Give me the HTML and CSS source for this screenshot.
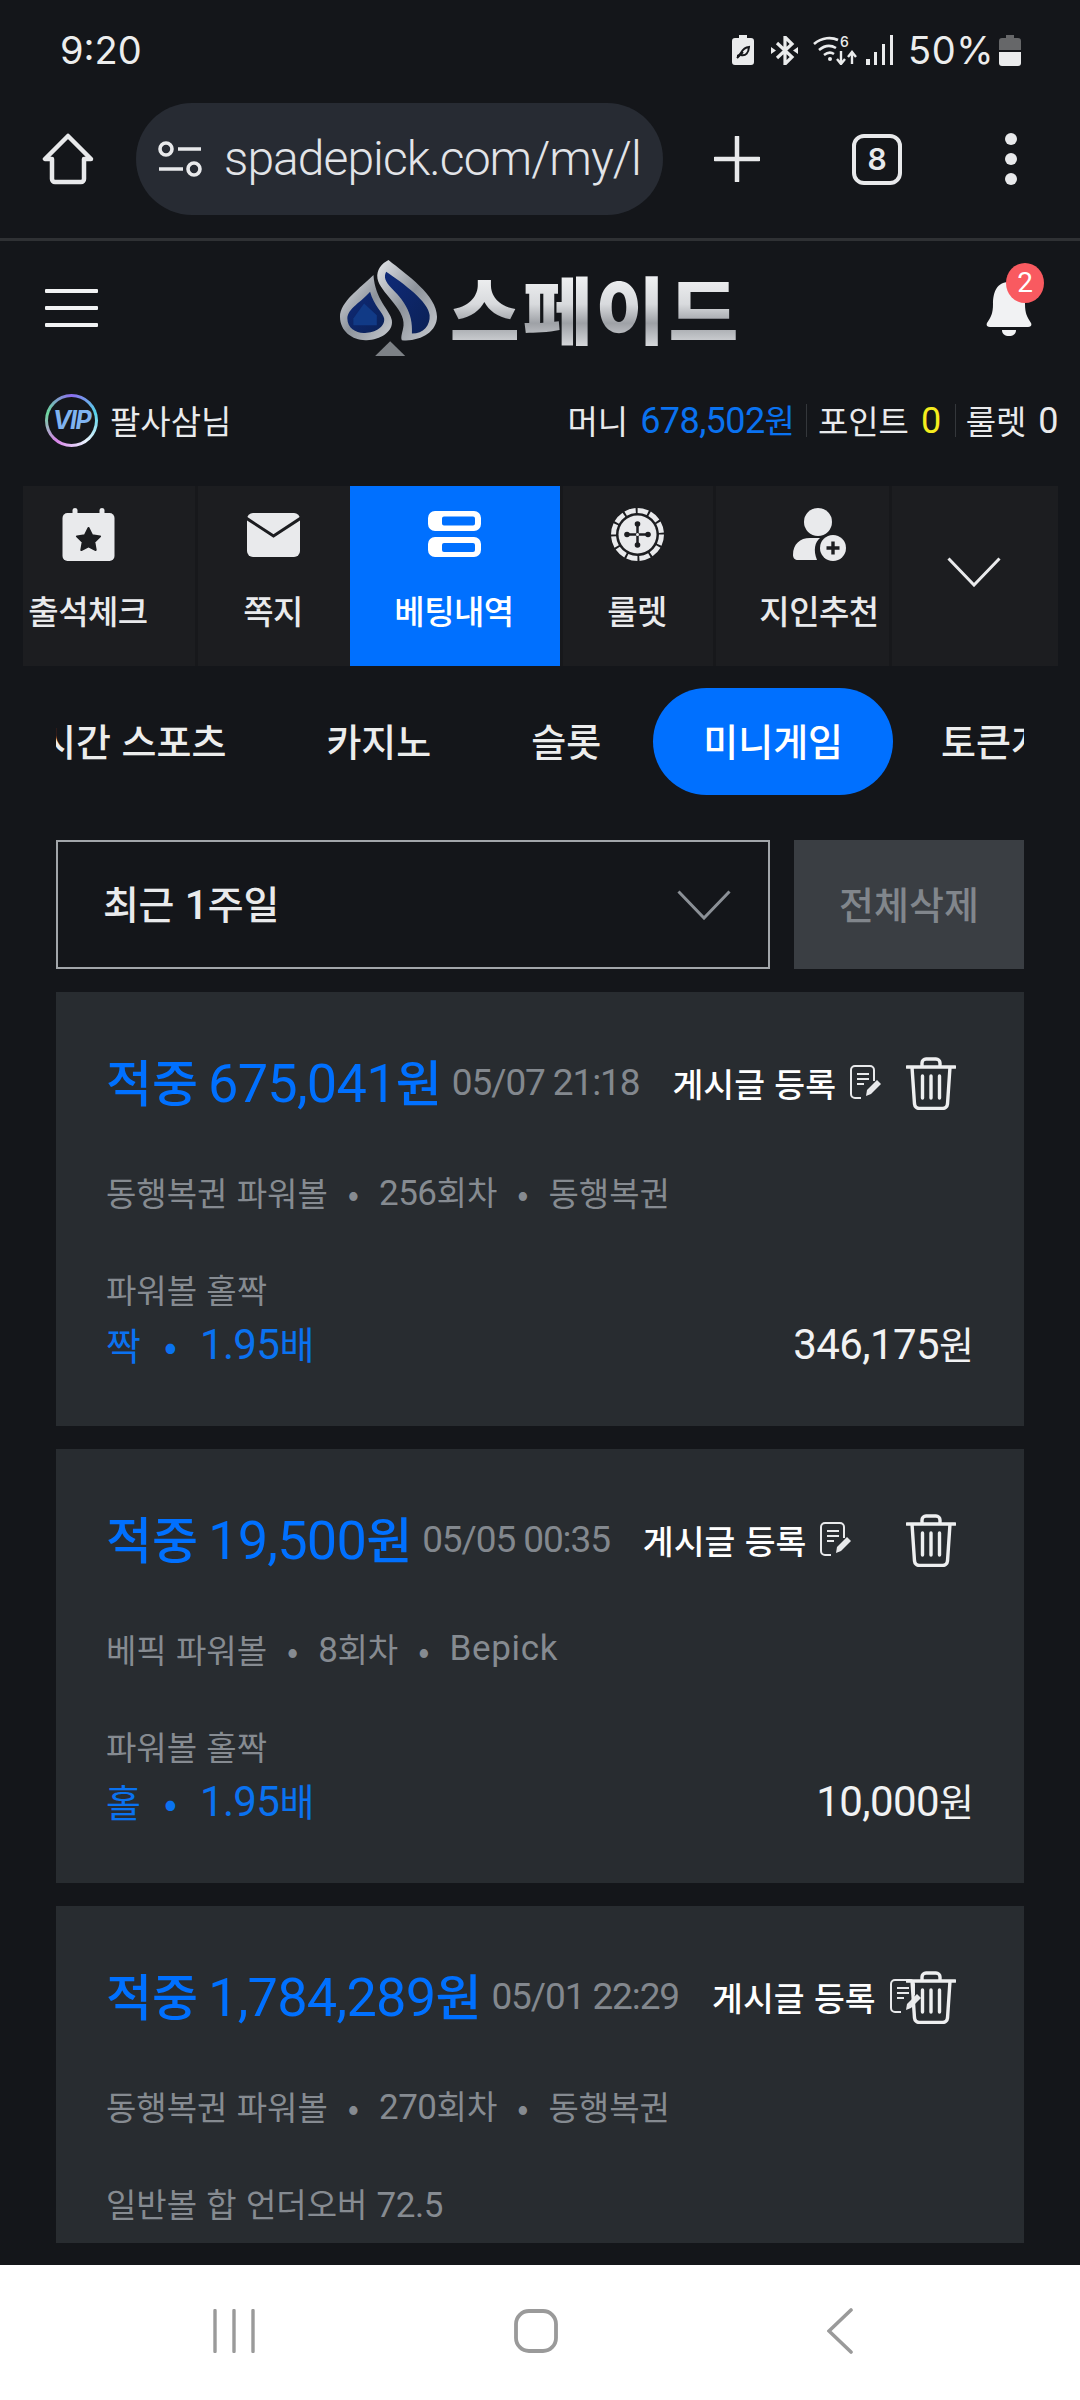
FILE: index.html
```html
<!DOCTYPE html>
<html lang="ko">
<head>
<meta charset="utf-8">
<title>스페이드</title>
<link rel="stylesheet" href="styles.css">
</head>
<body>
<div class="screen">
  <div class="status">
    <span class="time">9:20</span>
    <div class="status-right">
      <svg class="st-saver" viewBox="0 0 22 30"><path d="M7 0h8v3h4a3 3 0 0 1 3 3v21a3 3 0 0 1-3 3H3a3 3 0 0 1-3-3V6a3 3 0 0 1 3-3h4z" fill="#eaebec"/><path d="M5 21c5 0 3-8 12-9-.5 6-3 9-8 8M5 23l6-6" fill="none" stroke="#14161a" stroke-width="2"/></svg>
      <svg class="st-bt" viewBox="0 0 27 29"><path d="M6 7l15 14-7 7V1l7 7L6 22" fill="none" stroke="#eaebec" stroke-width="3.2"/><path d="M0 11l5 3.5L0 18zM27 11l-5 3.5 5 3.5z" fill="#eaebec"/></svg>
      <svg class="st-wifi" viewBox="0 0 44 30"><path d="M1 9c8-7 18-7 24-4M6 15c6-5 12-5 17-2M11 20c4-3 7-3 10-1" fill="none" stroke="#eaebec" stroke-width="2.6"/><circle cx="17" cy="24" r="2" fill="#eaebec"/><path d="M28 16v12m-4-4l4 5 4-5M39 29V18m-4 4l4-5 4 5" fill="none" stroke="#eaebec" stroke-width="2.4"/><text x="27" y="12" class="st-six">6</text></svg>
      <svg class="st-sig" viewBox="0 0 28 30"><rect x="0" y="24" width="4" height="6" fill="#eaebec"/><rect x="8" y="17" width="3" height="13" fill="#eaebec"/><rect x="16" y="9" width="3" height="21" fill="#eaebec"/><rect x="24" y="0" width="3" height="30" fill="#eaebec"/></svg>
      <span class="pct">50%</span>
      <svg class="st-bat" viewBox="0 0 22 31"><path d="M7 0h8v3h4a3 3 0 0 1 3 3v9H0V6a3 3 0 0 1 3-3h4z" fill="#666769"/><path d="M0 17h22v11a3 3 0 0 1-3 3H3a3 3 0 0 1-3-3z" fill="#eaebec"/></svg>
    </div>
  </div>

  <div class="toolbar">
    <svg class="tb-home" viewBox="0 0 52 52"><path d="M26 3L3 26h7v20a3 3 0 0 0 3 3h26a3 3 0 0 0 3-3V26h7z" fill="none" stroke="#e8e9eb" stroke-width="4.5" stroke-linejoin="round"/></svg>
    <div class="urlbar">
      <svg class="tb-tune" viewBox="0 0 44 36"><circle cx="8" cy="8" r="6" fill="none" stroke="#e8e9eb" stroke-width="3.6"/><path d="M20 8h23M1 28h24" stroke="#e8e9eb" stroke-width="3.6"/><circle cx="36" cy="28" r="6" fill="none" stroke="#e8e9eb" stroke-width="3.6"/></svg>
      <span class="url">spadepick.com/my/l</span>
    </div>
    <svg class="tb-plus" viewBox="0 0 46 46"><path d="M23 1v44M1 23h44" stroke="#e8e9eb" stroke-width="4.5" stroke-linecap="round"/></svg>
    <div class="tb-tabs">8</div>
    <div class="tb-dots"><i></i><i></i><i></i></div>
  </div>

  <header class="header">
    <div class="burger"><i></i><i></i><i></i></div>
    <div class="logo">
      <svg class="spade" viewBox="60 65 290 290">
        <defs>
          <linearGradient id="sil" x1="0" y1="0" x2="1" y2="1"><stop offset="0" stop-color="#e4e6ea"/><stop offset=".5" stop-color="#8d939b"/><stop offset="1" stop-color="#c9ccd1"/></linearGradient>
          <linearGradient id="blu" x1="0" y1="0" x2="1" y2="1"><stop offset="0" stop-color="#0f2a78"/><stop offset="1" stop-color="#0b2156"/></linearGradient>
        </defs>
        <path d="M160 110C120 150 60 190 60 235c0 45 40 72 80 70 40-2 80-25 75-60-5-30-50-60-55-135z" fill="url(#sil)"/>
        <path d="M150 160c-25 30-68 50-68 80 0 30 28 45 53 43 30 0 60-18 57-43-2-15-32-40-42-80z" fill="url(#blu)"/>
        <path d="M132 195l-32 45 0 20 70 0 0-30z" fill="#113a86"/>
        <path d="M205 65c-20 10-37 30-33 55 6 40 83 90 78 140-2 20-10 35-5 45 55 5 105-25 105-70 0-65-90-125-145-170z" fill="url(#sil)"/>
        <path d="M198 100c-8 15-3 30 17 50 30 30 65 70 60 135 35 0 55-25 53-55-3-40-78-95-130-130z" fill="url(#blu)"/>
        <path d="M165 352l45-44 45 44z" fill="#7d8186"/>
      </svg>
      <span class="logo-text">스페이드</span>
    </div>
    <div class="bell">
      <svg viewBox="0 0 48 56"><path d="M24 2C12 2 8 12 8 24c0 9-2 13-6 19-1 2 0 4 3 4h38c3 0 4-2 3-4-4-6-6-10-6-19C40 12 36 2 24 2z" fill="#f1f2f3"/><path d="M17 50h14c0 4-3 6-7 6s-7-2-7-6z" fill="#f1f2f3"/></svg>
      <span class="badge">2</span>
    </div>
  </header>

  <div class="userbar">
    <div class="user">
      <div class="vip"><span>VIP</span></div>
      <span class="name">팔사삼님</span>
    </div>
    <div class="wallet">
      <span class="w-label">머니</span><span class="w-val w-blue"><span class="num">678,502</span>원</span>
      <i class="w-sep"></i>
      <span class="w-label">포인트</span><span class="w-val w-yellow"><span class="num">0</span></span>
      <i class="w-sep"></i>
      <span class="w-label">룰렛</span><span class="w-val"><span class="num">0</span></span>
    </div>
  </div>

  <nav class="nav">
    <div class="nav-strip">
      <a class="cell cell-a">
        <svg class="ic ic-cal" viewBox="0 0 52 53"><rect x="0" y="5" width="52" height="48" rx="5" fill="#e9eaec"/><rect x="10" y="0" width="5" height="10" rx="2.5" fill="#e9eaec"/><rect x="37" y="0" width="5" height="10" rx="2.5" fill="#e9eaec"/><path d="M26 20l3.6 7.3 8 1.1-5.8 5.6 1.4 8L26 38.3 18.8 42l1.4-8-5.8-5.6 8-1.1z" fill="#1c1d20" stroke="#1c1d20" stroke-width="2" stroke-linejoin="round"/></svg>
        <span class="cell-t">출석체크</span>
      </a>
      <a class="cell cell-b">
        <svg class="ic ic-mail" viewBox="0 0 53 53"><rect x="0" y="5" width="53" height="44" rx="6" fill="#e9eaec"/><path d="M-1 10l27.5 18L54 10" fill="none" stroke="#1c1d20" stroke-width="3"/></svg>
        <span class="cell-t">쪽지</span>
      </a>
      <a class="cell cell-c active">
        <svg class="ic" viewBox="0 0 53 53"><path fill-rule="evenodd" d="M7 3h39a7 7 0 0 1 7 7v6a7 7 0 0 1-7 7H7a7 7 0 0 1-7-7v-6a7 7 0 0 1 7-7zm9 5.500a2 2 0 0 0-2 2v5a2 2 0 0 0 2 2h29a2 2 0 0 0 2-2v-5a2 2 0 0 0-2-2zM7 29h39a7 7 0 0 1 7 7v6a7 7 0 0 1-7 7H7a7 7 0 0 1-7-7v-6a7 7 0 0 1 7-7zm9 6a2 2 0 0 0-2 2v5a2 2 0 0 0 2 2h29a2 2 0 0 0 2-2v-5a2 2 0 0 0-2-2z" fill="#fff"/></svg>
        <span class="cell-t">베팅내역</span>
      </a>
      <a class="cell cell-d">
        <svg class="ic" viewBox="0 0 53 53"><circle cx="26.500" cy="26.500" r="24" fill="none" stroke="#e9eaec" stroke-width="5" stroke-dasharray="10.500 2"/><circle cx="26.500" cy="26.500" r="19" fill="#e9eaec"/><path d="M26.500 16v21M16 26.500h21" stroke="#1c1d20" stroke-width="2.500"/><circle cx="26.500" cy="16" r="2.800" fill="#1c1d20"/><circle cx="26.500" cy="37" r="2.800" fill="#1c1d20"/><circle cx="16" cy="26.500" r="2.800" fill="#1c1d20"/><circle cx="37" cy="26.500" r="2.800" fill="#1c1d20"/><circle cx="26.500" cy="26.500" r="1.500" fill="#e9eaec"/></svg>
        <span class="cell-t">룰렛</span>
      </a>
      <a class="cell cell-e">
        <svg class="ic" viewBox="0 0 53 53"><circle cx="25" cy="14" r="14" fill="#e9eaec"/><path d="M0 47c0-11 7-17 17-17h10c-5 4-7 12-3 22H5c-3 0-5-2-5-5z" fill="#e9eaec"/><circle cx="40" cy="40" r="13" fill="#e9eaec"/><path d="M40 33.500v13M33.500 40h13" stroke="#1c1d20" stroke-width="3.400"/></svg>
        <span class="cell-t">지인추천</span>
      </a>
    </div>
    <button class="more" type="button"><svg viewBox="0 0 54 30"><path d="M1.500 1.500L27 28 52.500 1.500" fill="none" stroke="#e9eaec" stroke-width="3"/></svg></button>
  </nav>

  <div class="tabs">
    <div class="tabs-strip">
      <span class="tab">실시간 스포츠</span>
      <span class="tab">카지노</span>
      <span class="tab">슬롯</span>
      <span class="tab tab-on">미니게임</span>
      <span class="tab">토큰게임</span>
    </div>
  </div>

  <div class="filter">
    <div class="select"><span class="sel-t">최근 <span class="num">1</span>주일</span><svg viewBox="0 0 54 30"><path d="M1.500 1.500L27 28 52.500 1.500" fill="none" stroke="#8b9096" stroke-width="3"/></svg></div>
    <button class="del-all" type="button">전체삭제</button>
  </div>

  <div class="list">
    <article class="card">
      <div class="c-top">
        <span class="c-win">적중 <span class="num">675,041</span>원</span>
        <span class="c-date">05/07 21:18</span>
        <span class="c-post">게시글 등록<svg viewBox="0 0 32 34"><path d="M24 16V5a4 4 0 0 0-4-4H5a4 4 0 0 0-4 4v24a4 4 0 0 0 4 4h6M7 9h12M7 14h12M7 19h7" fill="none" stroke="#e8e9eb" stroke-width="2"/><path d="M16 31l1-6 10-10 4 4-10 10z" fill="#e8e9eb"/></svg></span>
      </div>
      <div class="c-sub"><span>동행복권 파워볼</span><i>•</i><span><span class="num">256</span>회차</span><i>•</i><span>동행복권</span></div>
      <div class="c-label">파워볼 홀짝</div>
      <div class="c-res"><span class="c-pick"><span>짝</span><i>•</i><span><span class="num">1.95</span>배</span></span><span class="c-amt"><span class="num">346,175</span>원</span></div>
      <svg class="trash" viewBox="0 0 50 53"><path d="M1 10h48M16 9V6a4 4 0 0 1 4-4h10a4 4 0 0 1 4 4v3M6 10l2.500 37a5 5 0 0 0 5 4.500h23a5 5 0 0 0 5-4.500L44 10M16.500 19v22M25 19v22M33.500 19v22" fill="none" stroke="#eeeff0" stroke-width="3.400" stroke-linecap="round"/></svg>
    </article>

    <article class="card">
      <div class="c-top">
        <span class="c-win">적중 <span class="num">19,500</span>원</span>
        <span class="c-date">05/05 00:35</span>
        <span class="c-post">게시글 등록<svg viewBox="0 0 32 34"><path d="M24 16V5a4 4 0 0 0-4-4H5a4 4 0 0 0-4 4v24a4 4 0 0 0 4 4h6M7 9h12M7 14h12M7 19h7" fill="none" stroke="#e8e9eb" stroke-width="2"/><path d="M16 31l1-6 10-10 4 4-10 10z" fill="#e8e9eb"/></svg></span>
      </div>
      <div class="c-sub"><span>베픽 파워볼</span><i>•</i><span><span class="num">8</span>회차</span><i>•</i><span class="num lat">Bepick</span></div>
      <div class="c-label">파워볼 홀짝</div>
      <div class="c-res"><span class="c-pick"><span>홀</span><i>•</i><span><span class="num">1.95</span>배</span></span><span class="c-amt"><span class="num">10,000</span>원</span></div>
      <svg class="trash" viewBox="0 0 50 53"><path d="M1 10h48M16 9V6a4 4 0 0 1 4-4h10a4 4 0 0 1 4 4v3M6 10l2.500 37a5 5 0 0 0 5 4.500h23a5 5 0 0 0 5-4.500L44 10M16.500 19v22M25 19v22M33.500 19v22" fill="none" stroke="#eeeff0" stroke-width="3.400" stroke-linecap="round"/></svg>
    </article>

    <article class="card">
      <div class="c-top">
        <span class="c-win">적중 <span class="num">1,784,289</span>원</span>
        <span class="c-date">05/01 22:29</span>
        <span class="c-post">게시글 등록<svg viewBox="0 0 32 34"><path d="M24 16V5a4 4 0 0 0-4-4H5a4 4 0 0 0-4 4v24a4 4 0 0 0 4 4h6M7 9h12M7 14h12M7 19h7" fill="none" stroke="#e8e9eb" stroke-width="2"/><path d="M16 31l1-6 10-10 4 4-10 10z" fill="#e8e9eb"/></svg></span>
      </div>
      <div class="c-sub"><span>동행복권 파워볼</span><i>•</i><span><span class="num">270</span>회차</span><i>•</i><span>동행복권</span></div>
      <div class="c-label">일반볼 합 언더오버 <span class="num">72.5</span></div>
      <svg class="trash" viewBox="0 0 50 53"><path d="M1 10h48M16 9V6a4 4 0 0 1 4-4h10a4 4 0 0 1 4 4v3M6 10l2.500 37a5 5 0 0 0 5 4.500h23a5 5 0 0 0 5-4.500L44 10M16.500 19v22M25 19v22M33.500 19v22" fill="none" stroke="#eeeff0" stroke-width="3.400" stroke-linecap="round"/></svg>
    </article>
  </div>

  <div class="sysnav">
    <svg class="sn-rec" viewBox="0 0 42 44"><path d="M2 1.500v41M21 1.500v41M40 1.500v41" stroke="#9a9a9a" stroke-width="3.400" stroke-linecap="round"/></svg>
    <svg class="sn-home" viewBox="0 0 44 44"><rect x="2" y="2" width="40" height="40" rx="13" fill="none" stroke="#9a9a9a" stroke-width="3.800"/></svg>
    <svg class="sn-back" viewBox="0 0 26 46"><path d="M24 2L2 23l22 21" fill="none" stroke="#9a9a9a" stroke-width="3.600" stroke-linecap="round"/></svg>
  </div>
</div>
</body>
</html>
```
FILE: styles.css
```css
* { box-sizing: border-box; }
html, body { margin: 0; padding: 0; }
body {
  width: 1080px;
  height: 2400px;
  overflow: hidden;
  background: #14161a;
  font-family: "Noto Sans CJK KR", "Noto Sans", sans-serif;
  color: #e9eaec;
}
.screen { width: 1080px; height: 2400px; display: flex; flex-direction: column; overflow: hidden; }
.num { font-family: Roboto, "Noto Sans CJK KR", sans-serif; }
i { font-style: normal; }
a { display: flex; }
svg { display: block; flex-shrink: 0; }

/* status bar */
.status { height: 100px; flex-shrink: 0; padding: 0 59px 0 60px; display: flex; justify-content: space-between; align-items: center; }
.time, .pct { font-family: Inter, sans-serif; font-size: 38px; color: #eceded; line-height: 1; }
.status-right { display: flex; align-items: center; }
.st-saver { width: 22px; height: 30px; }
.st-bt { width: 27px; height: 29px; margin-left: 17px; }
.st-wifi { width: 44px; height: 30px; margin-left: 15px; }
.st-six { font: 500 14px Inter, sans-serif; fill: #eaebec; }
.st-sig { width: 28px; height: 30px; margin-left: 9px; }
.pct { margin-left: 14px; letter-spacing: 0.5px; }
.st-bat { width: 22px; height: 31px; margin-left: 5px; }

/* browser toolbar */
.toolbar { height: 138px; flex-shrink: 0; padding-bottom: 20px; display: flex; align-items: center; }
.tb-home { width: 52px; height: 52px; margin-left: 42px; }
.urlbar { width: 527px; height: 112px; margin-left: 42px; border-radius: 56px; background: #272b33; display: flex; align-items: center; padding-left: 22px; overflow: hidden; }
.tb-tune { width: 44px; height: 36px; }
.url { width: 420px; margin-left: 22px; white-space: nowrap; font-family: Roboto, sans-serif; font-size: 48px; font-weight: 300; letter-spacing: -0.950px; color: #e2e4e8; line-height: 60px; }
.tb-plus { width: 46px; height: 46px; margin-left: 51px; }
.tb-tabs { width: 50px; height: 51px; margin-left: 92px; border: 4.500px solid #e8e9eb; border-radius: 12px; display: flex; align-items: center; justify-content: center; font: 600 30px/1 Inter, sans-serif; color: #e8e9eb; }
.tb-dots { margin-left: 103px; display: flex; flex-direction: column; gap: 8px; }
.tb-dots i { display: block; width: 12px; height: 12px; border-radius: 50%; background: #e8e9eb; }

/* site header */
.header { height: 137px; flex-shrink: 0; border-top: 3px solid #2f3134; padding: 0 47px 0 45px; display: flex; align-items: center; justify-content: space-between; }
.burger { width: 53px; display: flex; flex-direction: column; gap: 13px; }
.burger i { display: block; height: 4px; border-radius: 1px; background: #f1f2f3; }
.logo { display: flex; align-items: center; margin-right: 2px; }
.spade { width: 97px; height: 97px; }
.logo-text {
  margin-left: 13px;
  font-size: 76px;
  font-weight: 900;
  line-height: 1;
  letter-spacing: 3px;
  background: linear-gradient(180deg, #f4f5f6 0%, #d8dadd 45%, #9ea1a6 70%, #d6d8db 100%);
  -webkit-background-clip: text;
  background-clip: text;
  color: transparent;
}
.bell { position: relative; width: 48px; height: 56px; }
.bell svg { width: 48px; height: 56px; }
.badge { position: absolute; left: 21px; top: -17px; width: 38px; height: 40px; border-radius: 50%; background: #f95a60; color: #fff; font: 400 28px/40px Roboto, sans-serif; text-align: center; }

/* user row */
.userbar { height: 90px; flex-shrink: 0; display: flex; align-items: center; justify-content: space-between; padding: 0 22px 0 45px; }
.user { display: flex; align-items: center; }
.vip { width: 53px; height: 53px; border-radius: 50%; background: conic-gradient(#8d6cf0, #55d3e8, #e9f5ff, #d884e8, #6cd89e, #8d6cf0); display: flex; align-items: center; justify-content: center; position: relative; }
.vip::before { content: ""; position: absolute; inset: 3px; border-radius: 50%; background: #14161a; }
.vip span { position: relative; font: italic 700 25px/1 Inter, sans-serif; letter-spacing: -1.500px; color: #7fb3f0; }
.name { margin-left: 12px; font-size: 33px; line-height: 40px; color: #e9eaec; }
.wallet { display: flex; align-items: center; font-size: 33px; line-height: 40px; }
.w-val { margin-left: 12px; }
.wallet .num { font-size: 36px; letter-spacing: -0.6px; }
.w-blue { color: #0a72f0; }
.w-yellow { color: #f5ec1e; }
.w-sep { display: block; width: 1px; height: 33px; margin: 0 11px; background: #34373b; }
.w-sep + .w-label + .w-val + .w-sep { margin: 0 10px 0 14px; }

/* icon menu */
.nav { position: relative; height: 180px; flex-shrink: 0; margin: 21px 22px 0 23px; overflow: hidden; background: #17181b; }
.nav-strip { margin-left: -40px; display: grid; grid-template-columns: 215px 152px 213px 153px 211px; height: 180px; }
.cell { flex-direction: column; align-items: center; padding: 22px 2px 0 0; background: #1c1d20; border-right: 3px solid #17181b; }
.cell-b { border-right: 0; }
.cell.active { background: #0070ff; color: #fff; }
.ic { width: 53px; height: 53px; }
.cell-t { margin-top: 29px; font-size: 33px; line-height: 40px; font-weight: 500; letter-spacing: -0.500px; white-space: nowrap; color: inherit; }
.more { position: absolute; top: 0; right: 0; width: 169px; height: 180px; padding: 71px 3px 0 0; border: 0; border-left: 3px solid #17181b; background: #1c1d20; display: flex; justify-content: center; align-items: flex-start; }
.more svg { width: 54px; height: 30px; }

/* category tabs */
.tabs { height: 107px; flex-shrink: 0; margin: 22px 56px 0; overflow: hidden; }
.tabs-strip { display: flex; margin-left: -100px; width: max-content; }
.tab { height: 107px; padding: 0 50px; font-size: 38px; font-weight: 500; line-height: 103px; white-space: nowrap; color: #eceded; }
.tab-on { margin: 0 -2px 0 2px; border-radius: 54px; background: #0070ff; color: #fff; }

/* filter */
.filter { flex-shrink: 0; margin: 45px 56px 0; display: flex; gap: 24px; height: 129px; }
.select { width: 714px; height: 129px; border: 2px solid #a2a6aa; padding: 0 37px 0 45px; display: flex; align-items: center; justify-content: space-between; }
.select svg { width: 54px; height: 30px; }
.sel-t { font-size: 39px; font-weight: 500; letter-spacing: -0.300px; margin-top: -5px; }
.sel-t .num { font-size: 41px; }
.del-all { width: 230px; height: 129px; border: 0; background: #3a3e43; color: #81868c; font-family: inherit; font-size: 38px; font-weight: 500; padding: 0 0 5px; }

/* bet cards */
.list { height: 1251px; flex-shrink: 0; margin: 23px 56px 0; overflow: hidden; display: flex; flex-direction: column; gap: 23px; }
.card { position: relative; flex-shrink: 0; background: #282c30; padding: 60px 50px 62px 50px; }
.c-top { display: flex; align-items: center; height: 60px; white-space: nowrap; }
.c-win { color: #0070ff; font-size: 50px; font-weight: 500; line-height: 60px; word-spacing: -4px; }
.c-win .num { font-size: 54px; letter-spacing: -0.700px; font-weight: 400; }
.c-date { margin-left: 10px; font-family: Roboto, sans-serif; font-size: 37px; letter-spacing: -1.100px; color: #83888e; }
.c-post { margin-left: 33px; display: flex; align-items: center; font-size: 33.500px; font-weight: 500; color: #fff; }
.c-post svg { width: 32px; height: 34px; margin-left: 14px; }
.trash { position: absolute; right: 68px; top: 65px; width: 50px; height: 53px; }
.c-sub { margin-top: 60px; height: 40px; display: flex; align-items: center; gap: 20px; font-size: 33px; line-height: 40px; color: #868b91; }
.c-sub .num { font-size: 35px; letter-spacing: -0.500px; }
.c-sub .lat { letter-spacing: 0.700px; }
.c-label { margin-top: 57px; font-size: 33px; line-height: 40px; color: #868b91; white-space: nowrap; }
.c-label .num { font-size: 35px; letter-spacing: -0.500px; }
.c-res { margin-top: 15px; height: 40px; display: flex; justify-content: space-between; align-items: center; font-size: 38px; line-height: 40px; }
.c-pick { display: flex; align-items: center; gap: 23px; color: #0a72f0; }
.c-amt { color: #f1f2f3; }
.c-res .num { font-size: 42px; letter-spacing: -0.600px; }

/* system nav */
.sysnav { position: relative; flex: 1; margin-top: 22px; background: #fff; }
.sn-rec { position: absolute; left: 213px; top: 44px; width: 42px; height: 44px; }
.sn-home { position: absolute; left: 514px; top: 44px; width: 44px; height: 44px; }
.sn-back { position: absolute; left: 827px; top: 43px; width: 26px; height: 46px; }
```
